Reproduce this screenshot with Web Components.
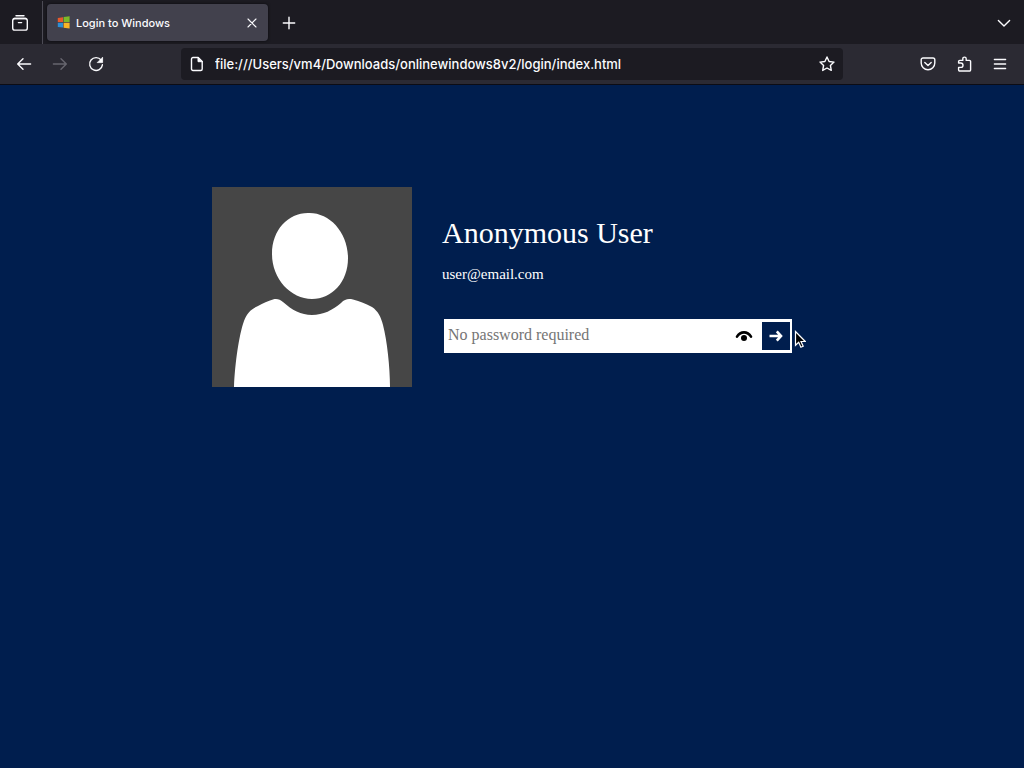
<!DOCTYPE html>
<html lang="en">
<head>
<meta charset="utf-8">
<title>Login to Windows</title>
<style>
  html, body {
    height: 100%;
    margin: 0;
  }
  body {
    background: #001e4e;
    overflow: hidden;
  }
</style>
</head>
<body>
<browser-window>
  <browser-tab slot="tabs">Login to Windows</browser-tab>
  <address-bar slot="address" url="file:///Users/vm4/Downloads/onlinewindows8v2/login/index.html"></address-bar>
  <login-panel>
    <user-avatar slot="avatar"></user-avatar>
    <span slot="name">Anonymous User</span>
    <span slot="email">user@email.com</span>
    <password-field slot="field" placeholder="No password required"></password-field>
  </login-panel>
</browser-window>

<script>
const makeTemplate = (html) => {
  const template = document.createElement('template');
  template.innerHTML = html;
  return template;
};

const buttonStyles = `
    button {
        display: grid;
        place-items: center;
        margin: 0;
        padding: 0;
        border: 0;
        background: none;
        color: inherit;
    }
    svg {
        display: block;
        fill: none;
        stroke: currentColor;
        stroke-width: 1.4;
        stroke-linecap: round;
        stroke-linejoin: round;
    }
`;

class TemplateElement extends HTMLElement {
  constructor() {
    super();
    this.attachShadow({ mode: 'open' });
    this.shadowRoot.appendChild(this.constructor.template.content.cloneNode(true));
  }
}

class BrowserWindow extends TemplateElement {
  static template = makeTemplate(`
  <style>
    ${buttonStyles}
    :host {
        display: flex;
        flex-direction: column;
        min-height: 100%;
        background: #001e4e;
        color: #fbfbfe;
        font-family: Inter, "Liberation Sans", sans-serif;
    }
    .tab-strip {
        display: flex;
        align-items: center;
        box-sizing: border-box;
        height: 44px;
        padding-top: 1px;
        background: #1c1b22;
    }
    .recent {
        width: 43px;
        height: 44px;
        padding-right: 2px;
        border-right: 1px solid #4c4b55;
    }
    .tab-strip slot {
        display: flex;
        margin-left: 4px;
    }
    .new-tab {
        width: 42px;
        height: 36px;
    }
    .all-tabs {
        width: 40px;
        height: 36px;
        margin-left: auto;
    }
    .toolbar {
        display: flex;
        align-items: center;
        height: 40px;
        background: #2b2a33;
        border-bottom: 1px solid #0c0c14;
    }
    .group {
        display: flex;
        flex: 1;
        padding: 0 6px;
    }
    .group.end {
        justify-content: flex-end;
    }
    .group button {
        width: 36px;
        height: 32px;
    }
    .toolbar slot {
        display: flex;
        flex: 0 1 662px;
    }
    button:disabled {
        color: #67666f;
    }
    main {
        flex: 1;
    }
  </style>
  <div class="tab-strip">
    <button class="recent" aria-label="Recent browsing">
      <svg width="18" height="18" viewBox="0 0 18 18"><path d="M5 1.7h8M3 4.5h12"/><rect x="1.7" y="4.5" width="14.6" height="11.6" rx="2.2"/><path d="M7.4 8.6h3.2"/></svg>
    </button>
    <slot name="tabs"></slot>
    <button class="new-tab" aria-label="New tab">
      <svg width="14" height="14" viewBox="0 0 14 14"><path d="M7 1.3v11.4M1.3 7h11.4"/></svg>
    </button>
    <button class="all-tabs" aria-label="List all tabs">
      <svg width="14" height="14" viewBox="0 0 14 14"><path d="M1.4 4.5 7 10l5.6-5.5"/></svg>
    </button>
  </div>
  <div class="toolbar">
    <div class="group">
      <button aria-label="Back"><svg width="16" height="16" viewBox="0 0 16 16"><path d="M14.6 8H1.8M7 2.8 1.7 8 7 13.2"/></svg></button>
      <button aria-label="Forward" disabled><svg width="16" height="16" viewBox="0 0 16 16"><path d="M1.4 8h12.8M9 2.8 14.3 8 9 13.2"/></svg></button>
      <button aria-label="Reload"><svg width="16" height="16" viewBox="0 0 16 16"><path d="M13.2 4.2A6.4 6.4 0 1 0 14.4 8.8"/><path d="M14.6 1.6v5H9.6z" fill="currentColor" stroke-width=".8"/></svg></button>
    </div>
    <slot name="address"></slot>
    <div class="group end">
      <button aria-label="Save to Pocket"><svg width="16" height="16" viewBox="0 0 16 16"><path d="M3 2h10a1.8 1.8 0 0 1 1.8 1.8V7a6.8 6.8 0 0 1-13.6 0V3.8A1.8 1.8 0 0 1 3 2z"/><path d="M4.8 6.4 8 9.4l3.2-3"/></svg></button>
      <button aria-label="Extensions"><svg width="16" height="16" viewBox="0 0 16 16"><path d="M2.600 7V5.600a1.200 1.200 0 0 1 1.200-1.200H6.800V2.800a1.700 1.700 0 0 1 3.400 0v1.600h3.200a1.200 1.200 0 0 1 1.200 1.200v8.200a1.200 1.200 0 0 1-1.200 1.200H3.800a1.200 1.200 0 0 1-1.200-1.200v-2.400h2.200a2.200 2.200 0 0 0 0-4.400z"/></svg></button>
      <button aria-label="Open application menu"><svg width="14" height="14" viewBox="0 0 14 14"><path d="M1.4 2.5h11.2M1.4 7h11.2M1.4 11.5h11.2"/></svg></button>
    </div>
  </div>
  <main><slot></slot></main>
  `);
}

class BrowserTab extends TemplateElement {
  static template = makeTemplate(`
  <style>
    ${buttonStyles}
    :host {
        display: flex;
        align-items: center;
        box-sizing: border-box;
        width: 221px;
        height: 37px;
        padding: 0 6px 0 10px;
        gap: 6px;
        border-radius: 4px;
        background: #42414d;
        box-shadow: 0 0 3px #0a0a0e;
        font-size: 11px;
        font-weight: 500;
    }
    .title {
        flex: 1;
        white-space: nowrap;
    }
    button {
        width: 20px;
        height: 20px;
    }
    .flag {
        stroke: none;
    }
  </style>
  <svg class="flag" width="13" height="13" viewBox="0 0 13 13">
    <path fill="#e8592b" d="M.8 2 6 1.2v4.9H.8z"/>
    <path fill="#7db928" d="M6.6 1.1 12.6.2v5.9h-6z"/>
    <path fill="#2d8fd5" d="M.8 6.7H6v4.9L.8 10.9z"/>
    <path fill="#f8b427" d="M6.6 6.7h6v5.9l-6-.9z"/>
  </svg>
  <span class="title"><slot></slot></span>
  <button aria-label="Close tab">
    <svg width="10" height="10" viewBox="0 0 10 10"><path stroke-width="1.1" d="m1 1 8 8M9 1 1 9"/></svg>
  </button>
  `);
}

class AddressBar extends TemplateElement {
  static template = makeTemplate(`
  <style>
    ${buttonStyles}
    :host {
        display: flex;
        flex: 1;
        align-items: center;
        height: 32px;
        border-radius: 4px;
        background: #1c1b22;
    }
    button {
        width: 32px;
        height: 32px;
    }
    input {
        flex: 1;
        min-width: 0;
        padding: 0 2px;
        border: 0;
        outline: 0;
        background: none;
        color: inherit;
        font-family: inherit;
        font-size: 13px;
        font-weight: 500;
    }
  </style>
  <button aria-label="Page information">
    <svg width="14" height="16" viewBox="0 0 14 16"><path d="M3 1.5h5.2l4 4V13a1.5 1.5 0 0 1-1.5 1.5H3A1.5 1.5 0 0 1 1.5 13V3A1.5 1.5 0 0 1 3 1.5z"/><path d="M8 1.5v4.2h4.2z" fill="currentColor" stroke-width="1"/></svg>
  </button>
  <input type="text" aria-label="Address" spellcheck="false">
  <button aria-label="Bookmark this page">
    <svg width="16" height="16" viewBox="0 0 16 16"><path d="m8 1 2.1 4.5 4.9.6-3.6 3.4.9 4.9L8 12l-4.3 2.4.9-4.9L1 6.1l4.9-.6z"/></svg>
  </button>
  `);

  connectedCallback() {
    this.shadowRoot.querySelector('input').value = this.getAttribute('url');
  }
}

class LoginPanel extends TemplateElement {
  static template = makeTemplate(`
  <style>
    :host {
        display: flex;
        gap: 30px;
        max-width: 600px;
        margin: 0 auto;
        padding-top: 102px;
        color: #fff;
        font-family: "Liberation Serif", serif;
    }
    .details {
        flex: 1;
        padding-top: 29px;
    }
    h1 {
        margin: 0;
        font-size: 30px;
        font-weight: 400;
        line-height: 34px;
    }
    p {
        margin: 14px 0 0;
        font-size: 15px;
        line-height: 20px;
    }
    form {
        margin: 35px 20px 0 2px;
    }
  </style>
  <slot name="avatar"></slot>
  <div class="details">
    <h1><slot name="name"></slot></h1>
    <p><slot name="email"></slot></p>
    <form><slot name="field"></slot></form>
  </div>
  `);
}

class UserAvatar extends TemplateElement {
  static template = makeTemplate(`
  <style>
    :host {
        display: block;
        flex: none;
        width: 200px;
        height: 200px;
        background: #464646;
    }
    svg {
        display: block;
        fill: #fff;
    }
  </style>
  <svg viewBox="0 0 200 200" role="img" aria-label="User picture">
    <path d="M96 26C117 25 136 45 136 71C136 95 120 112 100 112C79 112 60 92 60 67C60 43 76 26 96 26z"/>
    <path d="M22 200C23 176 27 148 32 134C35 126 39 122 46 119C51 116 56 114 61 112.500C65 111.500 68 112.500 71 115C80 123 89 128 100 128C111 128 121 123 129 116C133 112 136 111.500 141 112.500C148 114 154 117 160 120C166 124 169 130 171 138C175 153 178 180 178 200z"/>
  </svg>
  `);
}

class PasswordField extends TemplateElement {
  static template = makeTemplate(`
  <style>
    ${buttonStyles}
    :host {
        position: relative;
        display: flex;
        align-items: center;
        height: 34px;
        background: #fff;
        color: #000;
    }
    input {
        flex: 1;
        min-width: 0;
        padding: 0 4px 2px;
        border: 0;
        outline: 0;
        background: none;
        font-family: inherit;
        font-size: 16px;
    }
    input::placeholder {
        color: #757575;
    }
    .reveal {
        width: 36px;
        height: 28px;
    }
    .submit {
        width: 28px;
        height: 28px;
        margin-right: 2px;
        background: #001e4e;
        color: #fff;
    }
    .pointer {
        position: absolute;
        left: 100%;
        top: 11px;
        margin-left: 2px;
        stroke: none;
    }
  </style>
  <input type="password" aria-label="Password">
  <button class="reveal" type="button" aria-label="Show password">
    <svg width="18" height="12" viewBox="0 0 18 12"><path stroke-width="2.600" d="M2 6.600C5.500 1 12.500 1 16 6.600"/><circle cx="9" cy="8" r="3" fill="currentColor" stroke="none"/></svg>
  </button>
  <button class="submit" type="button" aria-label="Sign in">
    <svg width="14" height="12" viewBox="0 0 14 12"><path stroke-width="2.600" stroke-linecap="butt" stroke-linejoin="miter" d="M.5 6h11.500M7.800 1.400 12 6l-4.200 4.600"/></svg>
  </button>
  <svg class="pointer" width="12" height="19" viewBox="0 0 12 19"><path fill="#000" stroke="#fff" stroke-width="1.200" stroke-linejoin="miter" d="M1.500 1.500v13.800l3.200-3 2.200 5 2.300-1-2.200-4.800h4.300z"/></svg>
  `);

  connectedCallback() {
    const input = this.shadowRoot.querySelector('input');
    input.placeholder = this.getAttribute('placeholder');
    this.shadowRoot.querySelector('.reveal').addEventListener('click', () => {
      input.type = input.type === 'password' ? 'text' : 'password';
    });
  }
}

customElements.define('browser-window', BrowserWindow);
customElements.define('browser-tab', BrowserTab);
customElements.define('address-bar', AddressBar);
customElements.define('login-panel', LoginPanel);
customElements.define('user-avatar', UserAvatar);
customElements.define('password-field', PasswordField);
</script>
</body>
</html>
